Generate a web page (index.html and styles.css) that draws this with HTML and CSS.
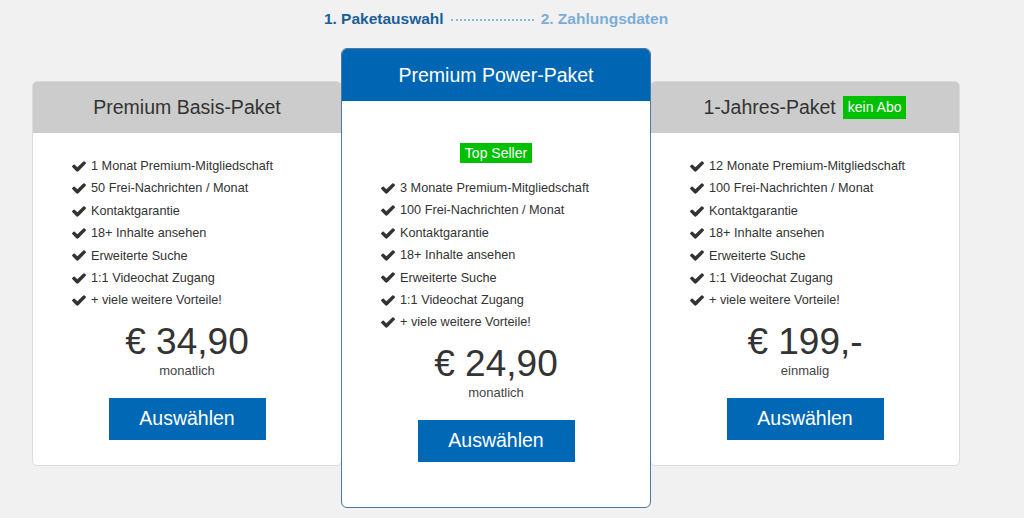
FILE: index.html
```html
<!DOCTYPE html>
<html lang="de">
<head>
<meta charset="utf-8">
<title>Paketauswahl</title>
<link rel="stylesheet" href="styles.css">
</head>
<body>
<div class="page">
  <div class="steps">
    <span class="step active">1. Paketauswahl</span>
    <span class="dots"></span>
    <span class="step next">2. Zahlungsdaten</span>
  </div>
  <div class="cards">
    <div class="card side">
      <div class="card-head">Premium Basis-Paket</div>
      <div class="card-body">
        <ul class="features">
          <li><svg class="chk" viewBox="121 334 1550 1188"><path d="M1671 566q0 40-28 68l-724 724-136 136q-28 28-68 28t-68-28l-136-136-362-362q-28-28-28-68t28-68l136-136q28-28 68-28t68 28l294 295 656-657q28-28 68-28t68 28l136 136q28 28 28 68z"/></svg>1 Monat Premium-Mitgliedschaft</li>
          <li><svg class="chk" viewBox="121 334 1550 1188"><path d="M1671 566q0 40-28 68l-724 724-136 136q-28 28-68 28t-68-28l-136-136-362-362q-28-28-28-68t28-68l136-136q28-28 68-28t68 28l294 295 656-657q28-28 68-28t68 28l136 136q28 28 28 68z"/></svg>50 Frei-Nachrichten / Monat</li>
          <li><svg class="chk" viewBox="121 334 1550 1188"><path d="M1671 566q0 40-28 68l-724 724-136 136q-28 28-68 28t-68-28l-136-136-362-362q-28-28-28-68t28-68l136-136q28-28 68-28t68 28l294 295 656-657q28-28 68-28t68 28l136 136q28 28 28 68z"/></svg>Kontaktgarantie</li>
          <li><svg class="chk" viewBox="121 334 1550 1188"><path d="M1671 566q0 40-28 68l-724 724-136 136q-28 28-68 28t-68-28l-136-136-362-362q-28-28-28-68t28-68l136-136q28-28 68-28t68 28l294 295 656-657q28-28 68-28t68 28l136 136q28 28 28 68z"/></svg>18+ Inhalte ansehen</li>
          <li><svg class="chk" viewBox="121 334 1550 1188"><path d="M1671 566q0 40-28 68l-724 724-136 136q-28 28-68 28t-68-28l-136-136-362-362q-28-28-28-68t28-68l136-136q28-28 68-28t68 28l294 295 656-657q28-28 68-28t68 28l136 136q28 28 28 68z"/></svg>Erweiterte Suche</li>
          <li><svg class="chk" viewBox="121 334 1550 1188"><path d="M1671 566q0 40-28 68l-724 724-136 136q-28 28-68 28t-68-28l-136-136-362-362q-28-28-28-68t28-68l136-136q28-28 68-28t68 28l294 295 656-657q28-28 68-28t68 28l136 136q28 28 28 68z"/></svg>1:1 Videochat Zugang</li>
          <li><svg class="chk" viewBox="121 334 1550 1188"><path d="M1671 566q0 40-28 68l-724 724-136 136q-28 28-68 28t-68-28l-136-136-362-362q-28-28-28-68t28-68l136-136q28-28 68-28t68 28l294 295 656-657q28-28 68-28t68 28l136 136q28 28 28 68z"/></svg>+ viele weitere Vorteile!</li>
        </ul>
        <div class="price">€ 34,90</div>
        <div class="period">monatlich</div>
        <button class="btn">Auswählen</button>
      </div>
    </div>

    <div class="card featured">
      <div class="card-head">Premium Power-Paket</div>
      <div class="card-body">
        <span class="badge top">Top Seller</span>
        <ul class="features">
          <li><svg class="chk" viewBox="121 334 1550 1188"><path d="M1671 566q0 40-28 68l-724 724-136 136q-28 28-68 28t-68-28l-136-136-362-362q-28-28-28-68t28-68l136-136q28-28 68-28t68 28l294 295 656-657q28-28 68-28t68 28l136 136q28 28 28 68z"/></svg>3 Monate Premium-Mitgliedschaft</li>
          <li><svg class="chk" viewBox="121 334 1550 1188"><path d="M1671 566q0 40-28 68l-724 724-136 136q-28 28-68 28t-68-28l-136-136-362-362q-28-28-28-68t28-68l136-136q28-28 68-28t68 28l294 295 656-657q28-28 68-28t68 28l136 136q28 28 28 68z"/></svg>100 Frei-Nachrichten / Monat</li>
          <li><svg class="chk" viewBox="121 334 1550 1188"><path d="M1671 566q0 40-28 68l-724 724-136 136q-28 28-68 28t-68-28l-136-136-362-362q-28-28-28-68t28-68l136-136q28-28 68-28t68 28l294 295 656-657q28-28 68-28t68 28l136 136q28 28 28 68z"/></svg>Kontaktgarantie</li>
          <li><svg class="chk" viewBox="121 334 1550 1188"><path d="M1671 566q0 40-28 68l-724 724-136 136q-28 28-68 28t-68-28l-136-136-362-362q-28-28-28-68t28-68l136-136q28-28 68-28t68 28l294 295 656-657q28-28 68-28t68 28l136 136q28 28 28 68z"/></svg>18+ Inhalte ansehen</li>
          <li><svg class="chk" viewBox="121 334 1550 1188"><path d="M1671 566q0 40-28 68l-724 724-136 136q-28 28-68 28t-68-28l-136-136-362-362q-28-28-28-68t28-68l136-136q28-28 68-28t68 28l294 295 656-657q28-28 68-28t68 28l136 136q28 28 28 68z"/></svg>Erweiterte Suche</li>
          <li><svg class="chk" viewBox="121 334 1550 1188"><path d="M1671 566q0 40-28 68l-724 724-136 136q-28 28-68 28t-68-28l-136-136-362-362q-28-28-28-68t28-68l136-136q28-28 68-28t68 28l294 295 656-657q28-28 68-28t68 28l136 136q28 28 28 68z"/></svg>1:1 Videochat Zugang</li>
          <li><svg class="chk" viewBox="121 334 1550 1188"><path d="M1671 566q0 40-28 68l-724 724-136 136q-28 28-68 28t-68-28l-136-136-362-362q-28-28-28-68t28-68l136-136q28-28 68-28t68 28l294 295 656-657q28-28 68-28t68 28l136 136q28 28 28 68z"/></svg>+ viele weitere Vorteile!</li>
        </ul>
        <div class="price">€ 24,90</div>
        <div class="period">monatlich</div>
        <button class="btn">Auswählen</button>
      </div>
    </div>

    <div class="card side">
      <div class="card-head">1-Jahres-Paket <span class="badge abo">kein Abo</span></div>
      <div class="card-body">
        <ul class="features">
          <li><svg class="chk" viewBox="121 334 1550 1188"><path d="M1671 566q0 40-28 68l-724 724-136 136q-28 28-68 28t-68-28l-136-136-362-362q-28-28-28-68t28-68l136-136q28-28 68-28t68 28l294 295 656-657q28-28 68-28t68 28l136 136q28 28 28 68z"/></svg>12 Monate Premium-Mitgliedschaft</li>
          <li><svg class="chk" viewBox="121 334 1550 1188"><path d="M1671 566q0 40-28 68l-724 724-136 136q-28 28-68 28t-68-28l-136-136-362-362q-28-28-28-68t28-68l136-136q28-28 68-28t68 28l294 295 656-657q28-28 68-28t68 28l136 136q28 28 28 68z"/></svg>100 Frei-Nachrichten / Monat</li>
          <li><svg class="chk" viewBox="121 334 1550 1188"><path d="M1671 566q0 40-28 68l-724 724-136 136q-28 28-68 28t-68-28l-136-136-362-362q-28-28-28-68t28-68l136-136q28-28 68-28t68 28l294 295 656-657q28-28 68-28t68 28l136 136q28 28 28 68z"/></svg>Kontaktgarantie</li>
          <li><svg class="chk" viewBox="121 334 1550 1188"><path d="M1671 566q0 40-28 68l-724 724-136 136q-28 28-68 28t-68-28l-136-136-362-362q-28-28-28-68t28-68l136-136q28-28 68-28t68 28l294 295 656-657q28-28 68-28t68 28l136 136q28 28 28 68z"/></svg>18+ Inhalte ansehen</li>
          <li><svg class="chk" viewBox="121 334 1550 1188"><path d="M1671 566q0 40-28 68l-724 724-136 136q-28 28-68 28t-68-28l-136-136-362-362q-28-28-28-68t28-68l136-136q28-28 68-28t68 28l294 295 656-657q28-28 68-28t68 28l136 136q28 28 28 68z"/></svg>Erweiterte Suche</li>
          <li><svg class="chk" viewBox="121 334 1550 1188"><path d="M1671 566q0 40-28 68l-724 724-136 136q-28 28-68 28t-68-28l-136-136-362-362q-28-28-28-68t28-68l136-136q28-28 68-28t68 28l294 295 656-657q28-28 68-28t68 28l136 136q28 28 28 68z"/></svg>1:1 Videochat Zugang</li>
          <li><svg class="chk" viewBox="121 334 1550 1188"><path d="M1671 566q0 40-28 68l-724 724-136 136q-28 28-68 28t-68-28l-136-136-362-362q-28-28-28-68t28-68l136-136q28-28 68-28t68 28l294 295 656-657q28-28 68-28t68 28l136 136q28 28 28 68z"/></svg>+ viele weitere Vorteile!</li>
        </ul>
        <div class="price">€ 199,-</div>
        <div class="period">einmalig</div>
        <button class="btn">Auswählen</button>
      </div>
    </div>
  </div>
</div>
</body>
</html>
```

FILE: styles.css
```css
html, body {
  margin: 0;
  padding: 0;
  background: #f1f1f1;
  font-family: "Liberation Sans", Arial, sans-serif;
  color: #333;
}
.page {
  width: 928px;
  margin-left: 32px;
}
.steps {
  display: flex;
  justify-content: center;
  align-items: center;
  gap: 7px;
  height: 38px;
  font-size: 15.5px;
  font-weight: bold;
}
.step.active { color: #1b5f98; }
.step.next { color: #7cadd6; }
.dots {
  width: 83px;
  height: 0;
  border-bottom: 2px dotted #8ab8dc;
  margin-top: 1px;
}
.cards {
  display: flex;
  align-items: flex-start;
  margin-top: 10px;
}
.card {
  width: 310px;
  box-sizing: border-box;
  background: #fff;
}
.card.side {
  margin-top: 33px;
  border: 1px solid #dcdcdc;
  border-radius: 5px;
  overflow: hidden;
}
.card.featured {
  position: relative;
  z-index: 1;
  margin: 0 -1px;
  border: 1px solid #4a7a9c;
  border-radius: 6px;
  overflow: hidden;
}
.card-head {
  height: 51px;
  display: flex;
  align-items: center;
  justify-content: center;
  gap: 7px;
  font-size: 19.5px;
  background: #cccccc;
  color: #333;
}
.featured .card-head {
  height: 52px;
  background: #0066b3;
  color: #fff;
}
.card-body {
  display: flex;
  flex-direction: column;
  align-items: center;
  padding: 22px 0 25px;
}
.featured .card-body {
  padding: 42px 0 45px;
}
.badge {
  display: inline-block;
  background: #00c000;
  color: #fff;
  font-size: 14px;
  line-height: 20px;
  padding: 0 5px;
}
.badge.top {
  margin-bottom: 14px;
}
.badge.abo {
  line-height: 23px;
  padding: 0 5px;
  font-size: 14px;
}
.features {
  list-style: none;
  margin: 0;
  padding: 0 0 0 39px;
  align-self: stretch;
  font-size: 12.7px;
  line-height: 22.4px;
  color: #333;
}
.features li {
  display: flex;
  align-items: center;
}
.chk {
  width: 14px;
  height: 11px;
  fill: #333;
  margin-right: 5px;
  flex: none;
}
.price {
  margin-top: 10px;
  font-size: 37px;
  line-height: 40px;
  color: #333;
}
.period {
  font-size: 13px;
  line-height: 18px;
  color: #444;
}
.btn {
  margin-top: 18px;
  width: 157px;
  height: 42px;
  border: 0;
  background: #0068b4;
  color: #fff;
  font-family: "Liberation Sans", Arial, sans-serif;
  font-size: 19.5px;
  padding: 0;
}
```
